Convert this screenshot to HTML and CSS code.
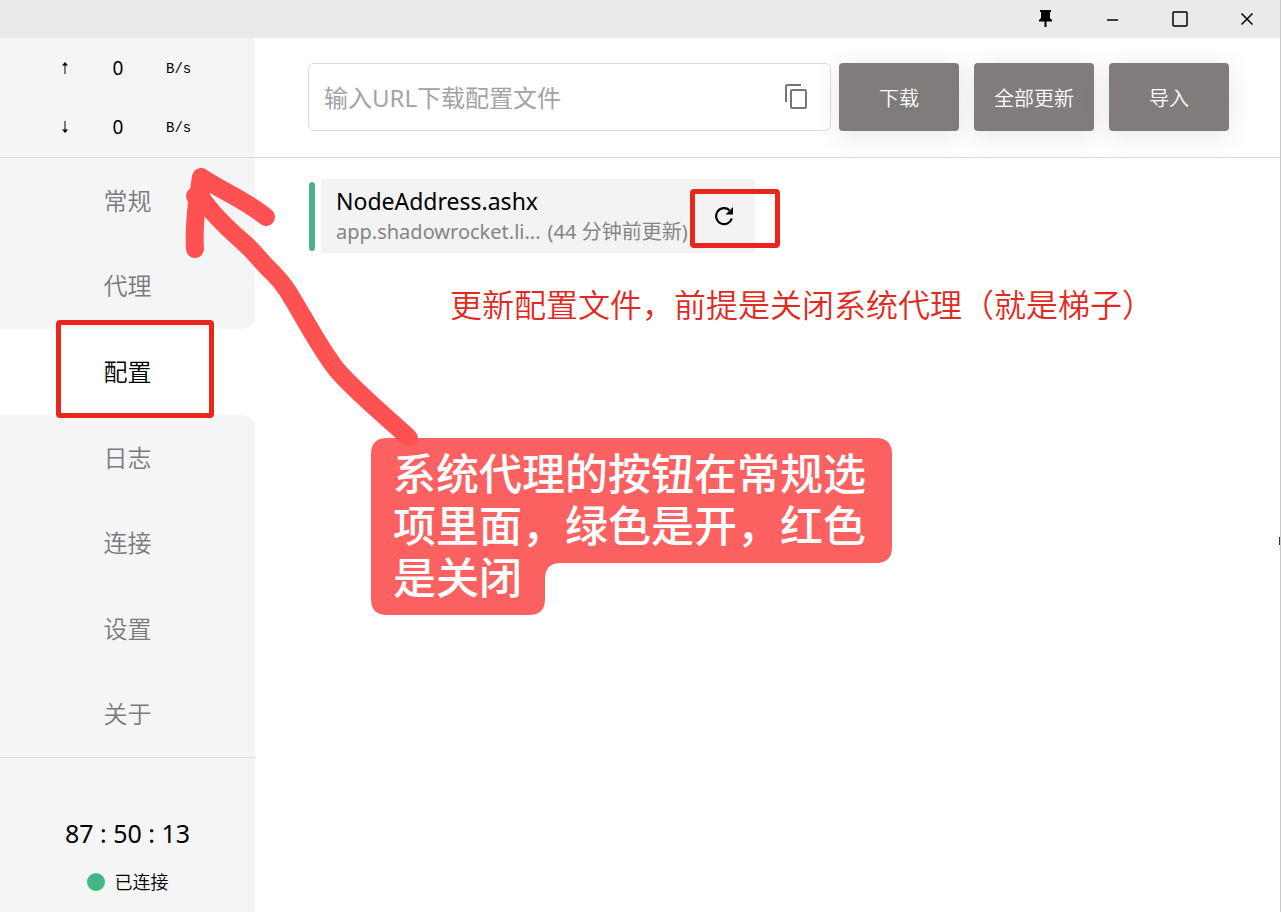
FILE: index.html
```html
<!DOCTYPE html>
<html lang="zh-CN">
<head>
  <meta charset="utf-8">
  <title>配置</title>
  <link rel="stylesheet" href="styles.css">
</head>
<body>
  <div class="window">
    <header class="titlebar">
      <button aria-label="置顶">
        <svg width="14" height="18" viewBox="0 0 14 18"><path d="M1 0h11v2h-1v6l2 2v1.500H7.500V17h-2v-5.500H0V10l2-2V2H1z"/></svg>
      </button>
      <button aria-label="最小化">
        <svg width="12" height="18" viewBox="0 0 12 18"><path d="M0 10h11" stroke="#000" stroke-width="1.500"/></svg>
      </button>
      <button aria-label="最大化">
        <svg width="18" height="18" viewBox="0 0 18 18"><rect x="2" y="2" width="14" height="14" rx="1" fill="none" stroke="#000" stroke-width="1.5"/></svg>
      </button>
      <button aria-label="关闭">
        <svg width="14" height="18" viewBox="0 0 14 18"><path d="M1.500 3.500l11 11M12.500 3.500l-11 11" stroke="#000" stroke-width="1.500"/></svg>
      </button>
    </header>

    <div class="layout">
      <aside class="sidebar">
        <div class="traffic">
          <div class="traffic-row">
            <svg width="10" height="14" viewBox="0 0 10 14"><path d="M5 13V2" stroke="#555" stroke-width="1.500"/><path d="M5 1L2 4.500h6z"/></svg>
            <span class="speed">0</span>
            <span class="unit">B/s</span>
          </div>
          <div class="traffic-row">
            <svg width="10" height="14" viewBox="0 0 10 14"><path d="M5 1v11" stroke="#555" stroke-width="1.500"/><path d="M5 13L2 9.500h6z"/></svg>
            <span class="speed">0</span>
            <span class="unit">B/s</span>
          </div>
        </div>
        <nav class="menu">
          <a href="#general">常规</a>
          <a href="#proxies" class="before-active">代理</a>
          <a href="#profiles" class="active">配置</a>
          <a href="#logs" class="after-active">日志</a>
          <a href="#connections">连接</a>
          <a href="#settings">设置</a>
          <a href="#about">关于</a>
        </nav>
        <div class="status">
          <div class="time">87 : 50 : 13</div>
          <div class="connected"><span class="dot"></span>已连接</div>
        </div>
      </aside>

      <main class="content">
        <form class="toolbar">
          <div class="url-box">
            <input type="text" aria-label="配置文件URL" placeholder="输入URL下载配置文件">
            <button type="button" class="copy" aria-label="粘贴">
              <svg width="24" height="28" viewBox="0 0 24 28" fill="none" stroke="#777579" stroke-width="2"><path d="M2 19V3.500A1.500 1.500 0 0 1 3.500 2H17"/><rect x="7" y="7" width="15" height="18" rx="1"/></svg>
            </button>
          </div>
          <div class="actions">
            <button type="button">下载</button>
            <button type="button">全部更新</button>
            <button type="button">导入</button>
          </div>
        </form>

        <section class="profiles">
          <div class="profile">
            <span class="marker"></span>
            <div class="card">
              <div class="info">
                <div class="name">NodeAddress.ashx</div>
                <div class="detail"><span>app.shadowrocket.li...</span><span>(44 分钟前更新)</span></div>
              </div>
              <button class="refresh" aria-label="更新">
                <svg width="20" height="20" viewBox="0 0 20 20"><path d="M17.800 12.500A8 8 0 1 1 15.500 4.200" fill="none" stroke="#000" stroke-width="2.200"/><path d="M19 1v7.500h-7.500z"/></svg>
              </button>
            </div>
          </div>
        </section>
      </main>
    </div>

    <!-- notes drawn over the window -->
    <div class="frame frame-menu"></div>
    <div class="frame frame-refresh"></div>
    <p class="note">更新配置文件，前提是关闭系统代理（就是梯子）</p>
    <div class="callout">
      <svg class="callout-shape" width="521" height="177" viewBox="0 0 521 177"><path d="M16 0H505Q521 0 521 16V109Q521 125 505 125H190Q174 125 174 141V161Q174 177 158 177H16Q0 177 0 161V16Q0 0 16 0Z" fill="#fb6161"/></svg>
      <p>系统代理的按钮在常规选<br>项里面，绿色是开，红色<br>是关闭</p>
    </div>
    <svg class="arrow" width="240" height="290" viewBox="180 160 240 290" fill="none" stroke="#fd5152" stroke-width="18" stroke-linecap="round" stroke-linejoin="round">
      <path d="M195 196L201 197C210 211 226 227 242 241C254 251 263 264 273 273C279 279 283 284 287 290C304 317 320 349 337 370C357 393 382 413 409 438"/>
      <path d="M195 249C194 232 195 220 197 203L201 177C222 191 244 199 266 217"/>
      <path d="M201 178L201 197"/>
      <path d="M196 186L209 193L212 208L204 215L196 220Z" fill="#fd5152" stroke="none"/>
    </svg>
    <span class="edge-dot"></span>
  </div>
</body>
</html>
```
FILE: styles.css
```css
* {
  box-sizing: border-box;
}
body {
  margin: 0;
  font-family: "Noto Sans", "Noto Sans CJK SC", sans-serif;
  color: #000;
  background: #fff;
}
button {
  padding: 0;
  border: none;
  background: none;
  font-family: inherit;
  cursor: pointer;
}
svg {
  display: block;
}
.window {
  position: relative;
  display: flex;
  flex-direction: column;
  min-height: 100vh;
  border-right: 1px solid #c8c8c8;
  overflow: hidden;
}

/* title bar */
.titlebar {
  display: flex;
  justify-content: flex-end;
  height: 38px;
  background: #eaeaea;
}
.titlebar button {
  display: flex;
  align-items: center;
  justify-content: center;
  width: 67px;
}

.layout {
  display: flex;
  flex: 1;
}

/* sidebar */
.sidebar {
  display: flex;
  flex-direction: column;
  width: 255px;
  flex-shrink: 0;
}
.traffic {
  height: 120px;
  background: #f5f5f5;
  border-bottom: 1px solid #dadada;
}
.traffic-row {
  display: grid;
  grid-template-columns: 10px 24px 28px;
  column-gap: 36px;
  align-items: center;
  height: 59px;
  padding-left: 60px;
}
.speed {
  font-size: 19px;
  text-align: center;
}
.unit {
  padding-top: 3px;
  font-family: "Liberation Mono", monospace;
  font-size: 14px;
}
.menu {
  display: flex;
  flex-direction: column;
  flex: 1;
}
.menu a {
  display: flex;
  flex: 1;
  align-items: center;
  justify-content: center;
  padding-bottom: 3px;
  background: #f5f5f5;
  color: #7a7a7d;
  font-size: 24px;
  font-weight: 350;
  text-decoration: none;
}
.menu .active {
  background: #fff;
  color: #000;
}
.menu .before-active {
  border-bottom-right-radius: 14px;
}
.menu .after-active {
  border-top-right-radius: 14px;
}
.status {
  height: 155px;
  padding-top: 57px;
  background: #f5f5f5;
  border-top: 1px solid #dadada;
  text-align: center;
}
.time {
  font-size: 25px;
  line-height: 36px;
}
.connected {
  display: flex;
  align-items: center;
  justify-content: center;
  gap: 10px;
  margin-top: 17px;
  font-size: 18px;
  font-weight: 350;
  line-height: 28px;
}
.dot {
  width: 18px;
  height: 18px;
  border-radius: 50%;
  background: #41b883;
}

/* content */
.content {
  flex: 1;
  min-width: 0;
}
.toolbar {
  display: flex;
  gap: 8px;
  height: 120px;
  padding: 25px 51px 26px 53px;
  border-bottom: 1px solid #dadada;
}
.url-box {
  display: flex;
  flex: 1;
  align-items: center;
  padding: 0 22px 0 15px;
  border: 1px solid #dadada;
  border-radius: 6px;
}
.url-box input {
  flex: 1;
  min-width: 0;
  padding: 0;
  border: none;
  outline: none;
  background: none;
  font-family: inherit;
  font-size: 24px;
}
.url-box input::placeholder {
  color: #a3a3a3;
}
.actions {
  display: flex;
  gap: 15px;
}
.actions button {
  width: 120px;
  border-radius: 4px;
  background: #807c7c;
  box-shadow: 0 4px 24px rgba(110, 90, 90, 0.15);
  color: #fff;
  font-size: 20px;
  font-weight: 350;
}
.profiles {
  padding: 21px 54px;
}
.profile {
  display: flex;
  align-items: center;
  gap: 6px;
}
.marker {
  width: 6px;
  height: 69px;
  border-radius: 3px;
  background: #4db08c;
}
.card {
  display: flex;
  align-items: center;
  gap: 26px;
  height: 74px;
  padding: 0 21px 0 15px;
  border-radius: 3px;
  background: #f4f3f3;
}
.name {
  font-size: 23px;
  line-height: 32px;
}
.detail {
  display: flex;
  gap: 7px;
  color: #858585;
  font-size: 20px;
  line-height: 30px;
  white-space: nowrap;
}

/* notes */
.frame {
  position: absolute;
  border: 5px solid #ea261c;
  border-radius: 4px;
}
.frame-menu {
  top: 320px;
  left: 56px;
  width: 158px;
  height: 98px;
}
.frame-refresh {
  top: 189px;
  left: 690px;
  width: 90px;
  height: 59px;
}
.note {
  position: absolute;
  top: 281px;
  left: 450px;
  margin: 0;
  color: #e02a1f;
  font-size: 32px;
  font-weight: 350;
  line-height: 48px;
  white-space: nowrap;
}
.callout {
  position: absolute;
  top: 438px;
  left: 371px;
  padding: 11px 22px;
  color: #fff;
}
.callout-shape {
  position: absolute;
  top: 0;
  left: 0;
}
.callout p {
  position: relative;
  margin: 0;
  font-family: "Liberation Sans", "Noto Sans CJK SC", sans-serif;
  font-size: 43px;
  font-weight: 500;
  line-height: 52px;
  white-space: nowrap;
}
.arrow {
  position: absolute;
  top: 160px;
  left: 180px;
}
.edge-dot {
  position: absolute;
  top: 537px;
  right: -1px;
  width: 2px;
  height: 8px;
  background: #333;
}
```
